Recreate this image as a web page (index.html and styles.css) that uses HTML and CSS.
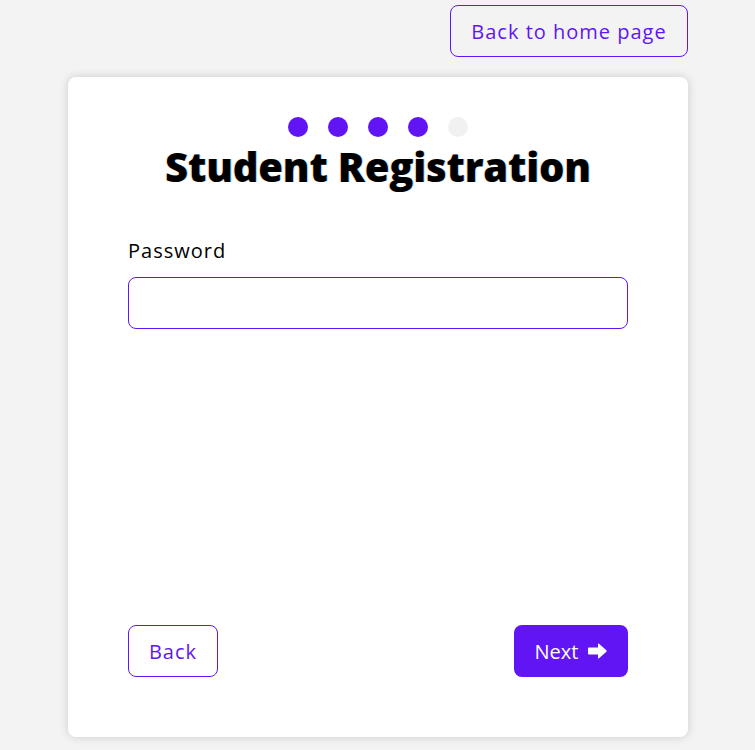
FILE: index.html
```html
<!DOCTYPE html>
<html lang="en">
<head>
<meta charset="utf-8">
<title>Student Registration</title>
<link rel="stylesheet" href="styles.css">
</head>
<body>
<div class="page">
  <div class="top">
    <button class="btn btn-outline home">Back to home page</button>
  </div>
  <main class="card">
    <div class="steps">
      <span class="dot done"></span>
      <span class="dot done"></span>
      <span class="dot done"></span>
      <span class="dot done"></span>
      <span class="dot"></span>
    </div>
    <h1 class="title">Student Registration</h1>
    <div class="field">
      <label class="label" for="pw">Password</label>
      <input class="input" id="pw" type="password">
    </div>
    <div class="actions">
      <button class="btn btn-outline back">Back</button>
      <button class="btn btn-primary">Next
        <svg class="arrow" viewBox="0 0 19 16" width="19" height="16"><path fill="currentColor" d="M1 4.5H10V1.2Q10 0 11 0.8L18.4 7.2Q19 8 18.4 8.8L11 15.2Q10 16 10 14.8V11.5H1Q0 11.5 0 10.5V5.5Q0 4.5 1 4.5Z"/></svg>
      </button>
    </div>
  </main>
</div>
</body>
</html>
```
FILE: styles.css
```css
* { box-sizing: border-box; }
html, body { margin: 0; padding: 0; }
body {
  background: #f3f3f3;
  font-family: "Open Sans", "Liberation Sans", sans-serif;
  color: #000;
}
.page {
  width: 620px;
  margin-left: 68px;
  padding-top: 5px;
  padding-bottom: 13px;
}
.top {
  display: flex;
  justify-content: flex-end;
  margin-bottom: 20px;
}
.btn {
  font-family: inherit;
  font-size: 20px;
  letter-spacing: 1px;
  height: 52px;
  border-radius: 8px;
  padding: 0 20px;
  cursor: pointer;
  display: inline-flex;
  align-items: center;
  justify-content: center;
}
.btn-outline {
  background: transparent;
  border: 1px solid #6115f5;
  color: #6115f5;
}
.home { width: 238px; padding: 0; }
.card {
  background: #fff;
  border-radius: 8px;
  box-shadow: 0 0 10px rgba(0,0,0,0.16);
  height: 660px;
  padding: 40px 60px 60px;
  display: flex;
  flex-direction: column;
}
.steps {
  display: flex;
  justify-content: center;
  gap: 20px;
}
.dot {
  width: 20px;
  height: 20px;
  border-radius: 50%;
  background: #f1f1f1;
}
.dot.done { background: #6115f5; }
.title {
  margin: 0;
  text-align: center;
  font-size: 40px;
  font-weight: 800;
  line-height: 1;
  margin-top: 10px;
  letter-spacing: -0.2px;
  text-shadow: 1px 0 0 rgba(0,160,255,0.3), -1px 0 0 rgba(255,120,0,0.2);
}
.field {
  margin-top: 52px;
  display: flex;
  flex-direction: column;
  gap: 14px;
}
.label {
  font-size: 20px;
  letter-spacing: 1px;
  line-height: 24px;
}
.input {
  height: 52px;
  border: 1px solid #6115f5;
  border-radius: 8px;
  font-size: 18px;
  padding: 0 14px;
  outline: none;
}
.actions {
  margin-top: auto;
  display: flex;
  justify-content: space-between;
}
.back { width: 90px; padding: 0; }
.btn-primary {
  background: #6115f5;
  color: #fff;
  border: none;
  width: 114px;
  padding: 0;
  gap: 10px;
  letter-spacing: 0;
}
.arrow { display: block; }
```
